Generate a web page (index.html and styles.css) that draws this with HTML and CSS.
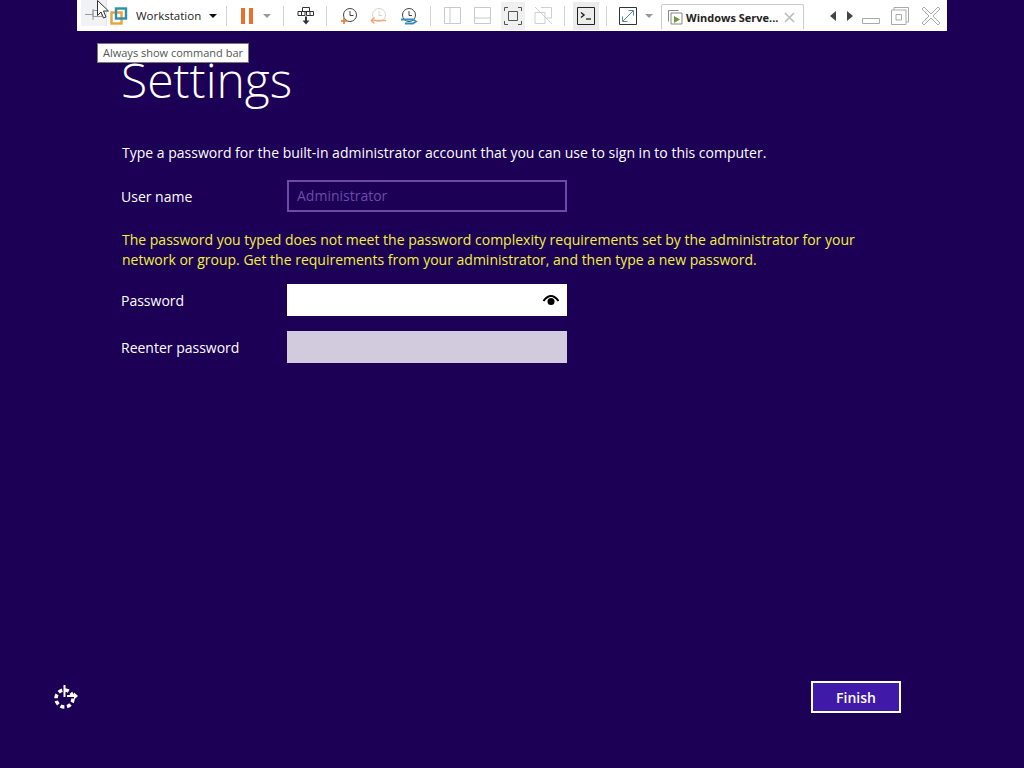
FILE: index.html
```html
<!DOCTYPE html>
<html lang="en">
<head>
    <meta charset="UTF-8">
    <title>Settings</title>
    <link rel="stylesheet" href="styles.css">
</head>
<body>
    <div class="toolbar">
        <div class="tool tool-pin">
            <svg width="24" height="24" viewBox="0 0 24 24" fill="none" stroke="#9a9a9a"><path d="M3 13.5h8M11 9.5h6l3 2v4h-9zM11 8v11"/></svg>
        </div>
        <div class="tool tool-logo">
            <svg width="18" height="18" viewBox="0 0 18 18" fill="none" stroke-width="2.4"><rect x="1.5" y="5.5" width="10" height="11" stroke="#e8a33d"/><rect x="6" y="1.5" width="10" height="10" stroke="#2f8fa8"/></svg>
        </div>
        <span class="brand">Workstation</span>
        <span class="caret caret-dark caret-brand"></span>
        <span class="sep sep-a"></span>
        <span class="pause"><i></i><i></i></span>
        <span class="caret caret-pause"></span>
        <span class="sep sep-b"></span>
        <svg class="icon icon-send" width="18" height="20" viewBox="0 0 18 20" fill="none" stroke="#333"><path d="M5.5 1.5h7v4h-7zM1 5.500h7v4H1zM9.500 5.500h7v4h-7zM4.500 5.500V9.500M13 5.500V9.500"/><path d="M9 10.500v5" stroke-width="2"/><path d="M5.500 14.500h7L9 18.500z" fill="#333" stroke="none"/></svg>
        <span class="sep sep-c"></span>
        <svg class="icon icon-clock1" width="18" height="18" viewBox="0 0 18 18" fill="none" stroke="#444"><circle cx="10" cy="8" r="6.500"/><path d="M10 4v4.500h3.500"/><path d="M1 14h6M4 11v6" stroke="#e0762c" stroke-width="1.500"/></svg>
        <svg class="icon icon-clock2" width="18" height="18" viewBox="0 0 18 18" fill="none" stroke="#d9d2cc"><circle cx="9" cy="8" r="6.500"/><path d="M9 4v4.500h3"/><path d="M1 13.500h15M1 13.500l3.500-3M1 13.500l3.500 3" stroke="#eda878" stroke-width="1.500"/></svg>
        <svg class="icon icon-clock3" width="18" height="18" viewBox="0 0 18 18" fill="none" stroke="#444"><circle cx="9" cy="8" r="6.500"/><path d="M9 4v4.500h3"/><path d="M1 12.500h12l3 2-3 2H5" stroke="#2f8fc4" stroke-width="1.800"/></svg>
        <span class="sep sep-d"></span>
        <svg class="icon icon-split1" width="17" height="17" viewBox="0 0 17 17" fill="none" stroke="#c9c9c9"><path d="M.5.500h16v16H.5zM6 .5v16"/></svg>
        <svg class="icon icon-split2" width="17" height="17" viewBox="0 0 17 17" fill="none" stroke="#c9c9c9"><path d="M.5.500h16v16H.5zM.5 11h16"/></svg>
        <div class="tool tool-full">
            <svg width="18" height="18" viewBox="0 0 18 18" fill="none" stroke="#555"><path d="M4.500 4.500h9v9h-9z"/><path d="M.5 4V.5H4M14 .5h3.500V4M17.500 14v3.500H14M4 17.500H.5V14"/></svg>
        </div>
        <svg class="icon icon-unity" width="19" height="19" viewBox="0 0 19 19" fill="none" stroke="#cfcfcf"><path d="M1 6.500h10v11H1zM7 1.500h10.500V12H12M1 1l17 17"/></svg>
        <span class="sep sep-e"></span>
        <div class="tool tool-console">
            <svg width="18" height="18" viewBox="0 0 18 18" fill="none" stroke="#222"><path d="M.5.500h17v17H.5z"/><path d="M4 5.500l3 2.500-3 2.500" stroke-width="1.500"/><path d="M9 12h5" stroke-width="1.300"/></svg>
        </div>
        <span class="sep sep-f"></span>
        <svg class="icon icon-stretch" width="18" height="18" viewBox="0 0 18 18" fill="none" stroke="#333"><path d="M.5.500h17v17H.5z"/><path d="M4 14l10-10M9.500 3.500h5v5M3.500 9.500v5h5" stroke="#5a8a9a"/></svg>
        <span class="caret caret-stretch"></span>
        <div class="tab">
            <svg width="15" height="15" viewBox="0 0 15 15" fill="none" stroke="#888"><path d="M.5.500h10M.5.500v11M3 3h11v11H3z"/><path d="M6 6l6 3.500-6 3.500z" fill="#6a9a3a" stroke="none"/></svg>
            <span class="tab-title">Windows Serve...</span>
            <svg class="tab-close" width="11" height="11" viewBox="0 0 11 11" stroke="#bbb" stroke-width="1.500"><path d="M1 1l9 9M10 1l-9 9"/></svg>
        </div>
        <span class="arrow arrow-left"></span>
        <span class="arrow arrow-right"></span>
        <svg class="icon icon-min" width="18" height="6" viewBox="0 0 18 6" fill="none" stroke="#aaa"><path d="M.5.500h17v5H.5z"/></svg>
        <svg class="icon icon-restore" width="18" height="18" viewBox="0 0 18 18" fill="none" stroke="#aaa"><path d="M3 3V.5h14.500V15H15M.5 3h14.500v14.500H.5zM5 7.500h5.500v5.500H5z"/></svg>
        <svg class="icon icon-close" width="20" height="20" viewBox="0 0 20 20" fill="none" stroke="#aaa"><path d="M1 3l2-2 7 7 7-7 2 2-7 7 7 7-2 2-7-7-7 7-2-2 7-7z"/></svg>
    </div>

    <div class="tooltip">Always show command bar</div>
    <svg class="cursor" width="12" height="20" viewBox="0 0 12 20"><path d="M.5.500v15l3.500-3.500 2.500 6 2.500-1-2.500-6h5z" fill="#fff" stroke="#333"/></svg>

    <main class="setup">
        <h1>Settings</h1>
        <p class="intro">Type a password for the built-in administrator account that you can use to sign in to this computer.</p>
        <div class="field">
            <label>User name</label>
            <div class="box box-disabled">Administrator</div>
        </div>
        <p class="warning">The password you typed does not meet the password complexity requirements set by the administrator for your network or group. Get the requirements from your administrator, and then type a new password.</p>
        <div class="field field-password">
            <label>Password</label>
            <div class="box box-active">
                <svg width="16" height="11" viewBox="0 0 16 11"><path d="M.5 6C3 2.500 5.500 1 8 1s5 1.500 7.500 5" fill="none" stroke="#000" stroke-width="2"/><circle cx="8" cy="6.500" r="3.500"/></svg>
            </div>
        </div>
        <div class="field field-reenter">
            <label>Reenter password</label>
            <div class="box box-empty"></div>
        </div>
    </main>

    <div class="bottom">
        <svg width="26" height="26" viewBox="0 0 26 26" fill="none" stroke="#fff" stroke-width="3.500"><circle cx="11.500" cy="14.500" r="8.500" stroke-dasharray="4 2.700"/><path d="M11.500 1v12M14 12h8" stroke-width="2"/><path d="M21 8.500l4 3.500-4 3.500z" fill="#fff" stroke="none"/></svg>
        <button class="finish">Finish</button>
    </div>
</body>
</html>
```

FILE: styles.css
```css
body {
    margin: 0;
    width: 1024px;
    height: 768px;
    overflow: hidden;
    position: relative;
    display: flex;
    flex-direction: column;
    background-color: #1b0056;
    color: #fff;
    font-family: "Open Sans", sans-serif;
    font-size: 14px;
}

/* vm command bar */
.toolbar {
    display: flex;
    align-items: center;
    flex: none;
    width: 870px;
    height: 31px;
    margin-left: 77px;
    background: #fff;
    color: #222;
}
.toolbar > * {
    flex: none;
}
.tool {
    display: flex;
    align-items: center;
    justify-content: center;
}
.tool-pin {
    width: 26px;
    height: 26px;
    margin: -5px 0 0 4px;
    background: #f1f2f6;
    border-right: 1px solid #e4e4ea;
    box-sizing: border-box;
}
.tool-logo {
    margin-left: 3px;
}
.brand {
    margin-left: 8px;
    width: 65px;
    font-size: 11.5px;
    white-space: nowrap;
}
.caret {
    width: 0;
    height: 0;
    border-left: 4px solid transparent;
    border-right: 4px solid transparent;
    border-top: 4px solid #999;
}
.caret-dark {
    border-top-color: #111;
}
.caret-brand {
    margin-left: 8px;
}
.caret-pause {
    margin-left: 10px;
}
.caret-stretch {
    margin-left: 8px;
}
.sep {
    width: 1px;
    height: 20px;
    background: #d4d4d4;
}
.sep-a { margin-left: 9px; }
.sep-b { margin-left: 12px; }
.sep-c { margin-left: 11px; }
.sep-d { margin-left: 12px; }
.sep-e { margin-left: 11px; }
.sep-f { margin-left: 7px; }
.pause {
    display: flex;
    gap: 4px;
    margin-left: 14px;
}
.pause i {
    width: 4px;
    height: 16px;
    background: #e8702a;
}
.icon-send { margin-left: 13px; }
.icon-clock1 { margin-left: 13px; }
.icon-clock2 { margin-left: 12px; }
.icon-clock3 { margin-left: 12px; }
.icon-split1 { margin-left: 13px; }
.icon-split2 { margin-left: 13px; }
.tool-full {
    width: 24px;
    height: 28px;
    margin-left: 10px;
    background: #f0f0f0;
}
.icon-unity { margin-left: 9px; }
.tool-console {
    width: 26px;
    height: 28px;
    margin-left: 8px;
    background: #ececec;
}
.icon-stretch { margin-left: 12px; }
.tab {
    display: flex;
    align-items: center;
    width: 143px;
    height: 25px;
    margin: 2px 0 0 8px;
    padding-left: 6px;
    box-sizing: border-box;
    border: 1px solid #ccc;
    border-bottom: 0;
    border-radius: 2px 2px 0 0;
}
.tab-title {
    margin-left: 3px;
    font-size: 11px;
    font-weight: 700;
    white-space: nowrap;
}
.tab-close {
    margin-left: 6px;
}
.arrow {
    width: 0;
    height: 0;
    border-top: 5px solid transparent;
    border-bottom: 5px solid transparent;
}
.arrow-left {
    margin-left: 26px;
    border-right: 6px solid #444;
}
.arrow-right {
    margin-left: 11px;
    border-left: 6px solid #444;
}
.icon-min {
    margin: 10px 0 0 9px;
}
.icon-restore { margin-left: 11px; }
.icon-close { margin-left: 12px; }

.tooltip {
    position: absolute;
    left: 97px;
    top: 43px;
    height: 20px;
    padding: 0 5px;
    background: #fff;
    border: 1px solid #777;
    box-sizing: border-box;
    color: #555;
    font-size: 11px;
    line-height: 18px;
    white-space: nowrap;
    z-index: 2;
}
.cursor {
    position: absolute;
    left: 97px;
    top: 0;
    z-index: 3;
}

/* setup form */
.setup {
    flex: 1;
    padding: 16px 0 0 121px;
}
.setup h1 {
    margin: 0;
    height: 66px;
    font-size: 48px;
    font-weight: 300;
    line-height: 66px;
}
.intro {
    margin: 30px 0 0 1px;
    line-height: 20px;
}
.field {
    display: flex;
    align-items: center;
    margin-top: 17px;
}
.field label {
    width: 166px;
}
.box {
    width: 280px;
    height: 32px;
    box-sizing: border-box;
}
.box-disabled {
    padding-left: 8px;
    border: 2px solid #6a4bab;
    color: #6a4bab;
    line-height: 28px;
}
.box-active {
    display: flex;
    align-items: center;
    justify-content: flex-end;
    padding-right: 8px;
    background: #fff;
}
.box-empty {
    background: #d1cbdd;
}
.warning {
    width: 770px;
    margin: 18px 0 0 1px;
    color: #f2f23c;
    line-height: 20px;
}
.field-password {
    margin-top: 14px;
}
.field-reenter {
    margin-top: 15px;
}

.bottom {
    display: flex;
    align-items: center;
    justify-content: space-between;
    flex: none;
    width: 848px;
    margin: 0 0 55px 53px;
}
.finish {
    width: 90px;
    height: 32px;
    background: #3f1aa8;
    border: 2px solid #fff;
    color: #fff;
    font-family: inherit;
    font-size: 14px;
    font-weight: 600;
}
```
